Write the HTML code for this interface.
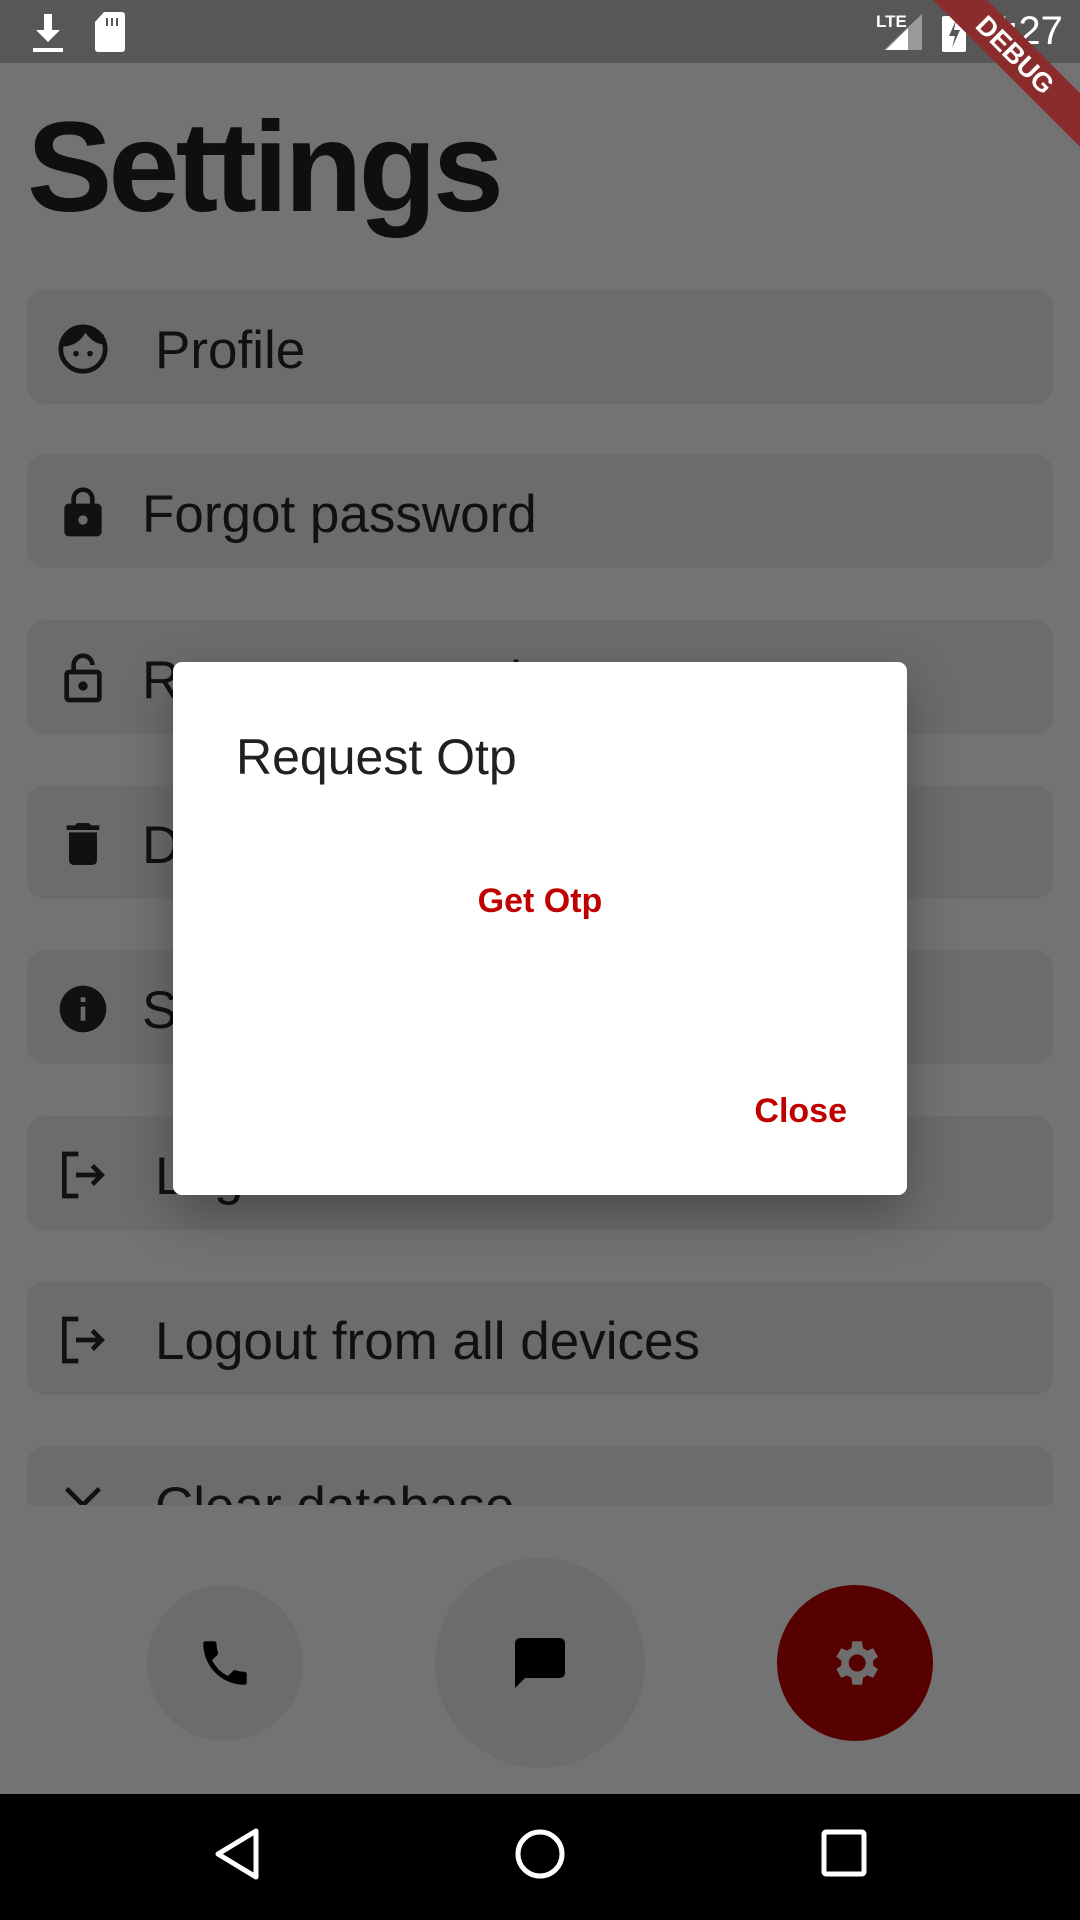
<!DOCTYPE html>
<html><head><meta charset="utf-8"><style>
*{margin:0;padding:0;box-sizing:border-box}
body{width:1080px;height:1920px;overflow:hidden;background:#737373;font-family:"Liberation Sans",sans-serif;position:relative}
.status{position:absolute;left:0;top:0;width:1080px;height:63px;background:#575757}
.title{position:absolute;left:27px;top:94px;font-size:128px;font-weight:bold;color:#0f0f0f;letter-spacing:-4px}
.card{position:absolute;left:27px;width:1026px;height:114px;background:#6c6c6c;border-radius:18px}
.card .t{position:absolute;left:128px;top:30px;font-size:53px;color:#111}
.card svg{position:absolute;left:28px;top:31px}
.clip{position:absolute;left:0;top:0;width:1080px;height:1505px;overflow:hidden}
.dlg{position:absolute;left:173px;top:662px;width:734px;height:533px;background:#fff;border-radius:9px;box-shadow:0 20px 50px rgba(0,0,0,.3)}
.circ{position:absolute;border-radius:50%;background:#6c6c6c}
.nav{position:absolute;left:0;top:1794px;width:1080px;height:126px;background:#000}
</style></head><body>
<div class="status">
<svg style="position:absolute;left:30px;top:12px" width="36" height="42" viewBox="0 0 36 42"><path d="M14 2h8v16h8L18 30 6 18h8z" fill="#fff"/><rect x="3" y="36" width="30" height="4" fill="#fff"/></svg>
<svg style="position:absolute;left:94px;top:12px" width="32" height="40" viewBox="0 0 32 40"><path d="M10 0h18a3 3 0 0 1 3 3v34a3 3 0 0 1-3 3H4a3 3 0 0 1-3-3V10z" fill="#fff"/><rect x="12" y="6" width="2" height="8" fill="#575757"/><rect x="17" y="6" width="2" height="8" fill="#575757"/><rect x="22" y="6" width="2" height="8" fill="#575757"/></svg>
<div style="position:absolute;left:876px;top:12px;color:#fff;font-size:17px;font-weight:bold">LTE</div>
<svg style="position:absolute;left:884px;top:14px" width="38" height="36" viewBox="0 0 38 36"><path d="M38 0V36H0z" fill="#9a9a9a"/><path d="M24 14V36H2z" fill="#fff"/></svg>
<svg style="position:absolute;left:942px;top:12px" width="24" height="40" viewBox="0 0 24 40"><rect x="7" y="0" width="10" height="4" fill="#fff"/><rect x="0" y="4" width="24" height="36" rx="2" fill="#fff"/><path d="M14 8l-7 16h6l-3 12 8-18h-6z" fill="#575757"/></svg>
<div style="position:absolute;left:985px;top:9px;color:#fff;font-size:40px">7:27</div>
</div>
<div style="position:absolute;left:880px;top:36px;width:270px;height:38px;background:#8a2c2c;transform:rotate(45deg);transform-origin:center;color:#fff;font-weight:bold;font-size:27px;text-align:center;line-height:38px">DEBUG</div>
<div class="title">Settings</div>
<div class="clip">
<div class="card" style="top:290px"><svg width="56" height="56" viewBox="0 0 24 24"><circle cx="12" cy="12" r="9.5" fill="none" stroke="#111" stroke-width="2"/><path d="M3 11c4 0 8-2 10-6 2 3 5 5 8 5V6L16 3H8L3 7z" fill="#111"/><circle cx="9" cy="14" r="1.2" fill="#111"/><circle cx="15" cy="14" r="1.2" fill="#111"/></svg><div class="t" style="left:128px">Profile</div></div>
<div class="card" style="top:454px"><svg width="56" height="56" viewBox="0 0 24 24"><path d="M18 8h-1V6A5 5 0 0 0 7 6v2H6a2 2 0 0 0-2 2v10a2 2 0 0 0 2 2h12a2 2 0 0 0 2-2V10a2 2 0 0 0-2-2zM9 6a3 3 0 0 1 6 0v2H9zm3 11a2 2 0 1 1 0-4 2 2 0 0 1 0 4z" fill="#111"/></svg><div class="t" style="left:115px">Forgot password</div></div>
<div class="card" style="top:620px"><svg width="56" height="56" viewBox="0 0 24 24"><path d="M18 8h-9V6a3 3 0 0 1 6 0h2A5 5 0 0 0 7 6v2H6a2 2 0 0 0-2 2v10a2 2 0 0 0 2 2h12a2 2 0 0 0 2-2V10a2 2 0 0 0-2-2zm0 12H6V10h12zm-6-3a2 2 0 1 0 0-4 2 2 0 0 0 0 4z" fill="#111"/></svg><div class="t" style="left:115px">Reset password</div></div>
<div class="card" style="top:785px"><svg width="56" height="56" viewBox="0 0 24 24"><path d="M6 19a2 2 0 0 0 2 2h8a2 2 0 0 0 2-2V7H6zM19 4h-3.5l-1-1h-5l-1 1H5v2h14z" fill="#111"/></svg><div class="t" style="left:115px">Delete account</div></div>
<div class="card" style="top:950px"><svg width="56" height="56" viewBox="0 0 24 24"><path d="M12 2a10 10 0 1 0 0 20 10 10 0 0 0 0-20zm1 15h-2v-6h2zm0-8h-2V7h2z" fill="#111"/></svg><div class="t" style="left:115px">Support</div></div>
<div class="card" style="top:1116px"><svg width="56" height="56" viewBox="0 0 24 24"><path d="M10 3H4v18h6M9 12h11M16 8l4 4-4 4" fill="none" stroke="#111" stroke-width="2"/></svg><div class="t">Logout</div></div>
<div class="card" style="top:1281px"><svg width="56" height="56" viewBox="0 0 24 24"><path d="M10 3H4v18h6M9 12h11M16 8l4 4-4 4" fill="none" stroke="#111" stroke-width="2"/></svg><div class="t">Logout from all devices</div></div>
<div class="card" style="top:1446px"><svg width="56" height="56" viewBox="0 0 24 24"><path d="M5 5l14 14M19 5L5 19" stroke="#111" stroke-width="2"/></svg><div class="t">Clear database</div></div>
</div>
<div class="circ" style="left:147px;top:1585px;width:156px;height:156px"></div>
<svg style="position:absolute;left:196px;top:1634px" width="58" height="58" viewBox="0 0 24 24"><path d="M6.6 10.8a15 15 0 0 0 6.6 6.6l2.2-2.2c.3-.3.7-.4 1-.2 1.1.4 2.3.6 3.6.6.6 0 1 .4 1 1V20c0 .6-.4 1-1 1A17 17 0 0 1 3 4c0-.6.4-1 1-1h3.5c.6 0 1 .4 1 1 0 1.3.2 2.5.6 3.6.1.3 0 .7-.2 1z" fill="#000"/></svg>
<div class="circ" style="left:435px;top:1558px;width:210px;height:210px"></div>
<svg style="position:absolute;left:510px;top:1633px" width="60" height="60" viewBox="0 0 24 24"><path d="M20 2H4a2 2 0 0 0-2 2v18l4-4h14a2 2 0 0 0 2-2V4a2 2 0 0 0-2-2z" fill="#000"/></svg>
<div class="circ" style="left:777px;top:1585px;width:156px;height:156px;background:#560000"></div>
<svg style="position:absolute;left:826px;top:1634px" width="58" height="58" viewBox="0 0 24 24"><path d="M19.4 13a7.5 7.5 0 0 0 0-2l2.1-1.6-2-3.5-2.5 1a7 7 0 0 0-1.7-1L14.9 3h-4l-.4 2.9a7 7 0 0 0-1.7 1l-2.5-1-2 3.5L6.4 11a7.5 7.5 0 0 0 0 2l-2.1 1.6 2 3.5 2.5-1a7 7 0 0 0 1.7 1l.4 2.9h4l.4-2.9a7 7 0 0 0 1.7-1l2.5 1 2-3.5zM12.9 15.5a3.5 3.5 0 1 1 0-7 3.5 3.5 0 0 1 0 7z" fill="#6e6e6e"/></svg>
<div class="dlg">
<div style="position:absolute;left:63px;top:66px;font-size:50px;color:#212121">Request Otp</div>
<div style="position:absolute;left:0;width:734px;text-align:center;top:220px;font-size:34px;font-weight:bold;color:#c00000">Get Otp</div>
<div style="position:absolute;right:60px;top:430px;font-size:34px;font-weight:bold;color:#c00000">Close</div>
</div>
<div class="nav">
<svg style="position:absolute;left:212px;top:34px" width="50" height="52" viewBox="0 0 50 52"><path d="M44 3L6 26l38 23z" fill="none" stroke="#fff" stroke-width="5" stroke-linejoin="round"/></svg>
<svg style="position:absolute;left:514px;top:34px" width="52" height="52" viewBox="0 0 52 52"><circle cx="26" cy="26" r="22" fill="none" stroke="#fff" stroke-width="5"/></svg>
<svg style="position:absolute;left:821px;top:35px" width="46" height="48" viewBox="0 0 46 48"><rect x="3" y="3" width="40" height="42" rx="2" fill="none" stroke="#fff" stroke-width="5"/></svg>
</div>
</body></html>
